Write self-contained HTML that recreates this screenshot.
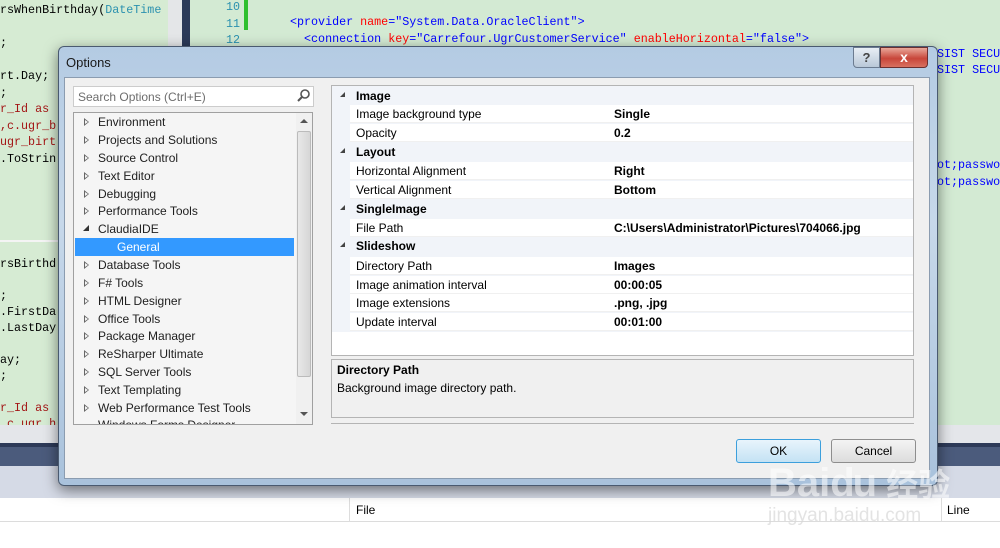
<!DOCTYPE html>
<html><head><meta charset="utf-8"><style>
*{margin:0;padding:0;box-sizing:border-box}
body{width:1000px;height:548px;overflow:hidden;position:relative;background:#fff;font-family:"Liberation Sans",sans-serif;font-size:12px;color:#000}
.a{position:absolute}
.code{font-family:"Liberation Mono",monospace;font-size:11.7px;white-space:pre;color:#000}
.t{position:absolute;left:98px;font-size:12px;color:#1e1e1e}
.tri{position:absolute;left:84px;width:0;height:0;border-left:5px solid #666;border-top:4px solid transparent;border-bottom:4px solid transparent}
.tri:after{content:"";position:absolute;left:-4px;top:-2px;border-left:3px solid #f5f5f5;border-top:2px solid transparent;border-bottom:2px solid transparent}
.r{position:absolute;left:350px;width:563px;height:18px;background:#fff;border-bottom:1px solid #f0f0f0}
.r span{position:absolute;left:6px;top:2px}
.r b{position:absolute;left:264px;top:2px}
.h{position:absolute;left:356px;font-weight:bold}
.ht{position:absolute;left:340px;width:0;height:0;border-right:5px solid #444;border-top:5px solid transparent}
</style></head><body>
<div class="a" style="left:0;top:0;width:1000px;height:425px;background:#d3ead3"></div>
<div class="a" style="left:0;top:0;width:170px;height:425px;background:#d6ebd3"></div>
<div class="a" style="left:168px;top:0;width:14px;height:425px;background:#e4e6e8"></div>
<div class="a" style="left:182px;top:0;width:8px;height:425px;background:#2b3a58"></div>
<div class="a" style="left:0;top:240px;width:170px;height:2px;background:#f4f4f4"></div>
<div class="a" style="left:244px;top:0;width:4px;height:30px;background:#2ec02e"></div>
<div class="a code" style="left:0;top:2px;line-height:16.5px"><span>rsWhenBirthday(<span style="color:#2b91af">DateTime</span></span>

;

rt.Day;
;
<span style="color:#a31515">r_Id as</span>
<span style="color:#a31515">,c.ugr_b</span>
<span style="color:#a31515">ugr_birt</span>
.ToStrin</div>
<div class="a code" style="left:0;top:256px;line-height:16px">rsBirthd

;
.FirstDa
.LastDay

ay;
;

<span style="color:#a31515">r_Id as</span>
<span style="color:#a31515">.c.ugr_h</span></div>
<div class="a code" style="left:226px;top:-1px;line-height:16.5px;color:#2b91af">10
11
12</div>
<div class="a code" style="left:290px;top:14px;line-height:16.5px;color:#00f">&lt;provider <span style="color:#f00">name</span>="System.Data.OracleClient"&gt;
  &lt;connection <span style="color:#f00">key</span>="Carrefour.UgrCustomerService" <span style="color:#f00">enableHorizontal</span>="false"&gt;</div>
<div class="a code" style="left:937px;top:46px;line-height:16px;color:#00f">SIST SECU
SIST SECU</div>
<div class="a code" style="left:937px;top:157px;line-height:17px;color:#00f">ot;passwo
ot;passwo</div>
<div class="a" style="left:0;top:425px;width:1000px;height:18px;background:#e4e6ea"></div>
<div class="a" style="left:0;top:443px;width:1000px;height:23px;background:#4b5b7c;border-top:4px solid #2d3a58"></div>
<div class="a" style="left:0;top:466px;width:1000px;height:32px;background:#d5dae6"></div>
<div class="a" style="left:0;top:498px;width:1000px;height:24px;background:#fff;border-bottom:1px solid #dcdcdc"></div>
<div class="a" style="left:349px;top:498px;width:1px;height:24px;background:#ddd"></div>
<div class="a" style="left:941px;top:498px;width:1px;height:24px;background:#ddd"></div>
<div class="a" style="left:356px;top:503px">File</div>
<div class="a" style="left:947px;top:503px">Line</div>
<div class="a" style="left:58px;top:46px;width:880px;height:440px;background:linear-gradient(#b4cbe3,#c7d8ea 40%,#a9c2dc);border:1px solid #4a5a70;border-radius:6px;box-shadow:0 4px 14px rgba(0,0,0,.5)"></div>
<div class="a" style="left:66px;top:55px;font-size:13px;color:#1a1a1a">Options</div>
<div class="a" style="left:853px;top:47px;width:27px;height:21px;border:1px solid #6b7b90;border-radius:0 0 0 4px;background:linear-gradient(#e8eef5,#b9c8d8);text-align:center;font-weight:bold;color:#444;font-size:13px;line-height:19px">?</div>
<div class="a" style="left:880px;top:47px;width:48px;height:21px;border:1px solid #6b3030;border-radius:0 0 4px 0;background:linear-gradient(#e9a89a,#c8463a 55%,#d87060);text-align:center;font-weight:bold;color:#fff;font-size:14px;line-height:19px">x</div>
<div class="a" style="left:64px;top:77px;width:866px;height:402px;background:#f0f0f0;border:1px solid #8b9cb0"></div>
<div class="a" style="left:73px;top:86px;width:241px;height:21px;background:#fff;border:1px solid #ccc"></div>
<div class="a" style="left:78px;top:90px;color:#6d6d6d">Search Options (Ctrl+E)</div>
<svg class="a" style="left:296px;top:88px" width="15" height="15"><circle cx="9" cy="6" r="4" fill="none" stroke="#555" stroke-width="1.6"/><line x1="6" y1="9" x2="2" y2="13" stroke="#555" stroke-width="2"/></svg>
<div class="a" style="left:73px;top:112px;width:240px;height:313px;background:#f5f5f5;border:1px solid #a0a0a0;overflow:hidden"></div>
<div class="a" style="left:296px;top:113px;width:16px;height:311px;background:#f0f0f0"></div>
<div class="a" style="left:300px;top:119px;border-bottom:4px solid #555;border-left:4px solid transparent;border-right:4px solid transparent"></div>
<div class="a" style="left:300px;top:412px;border-top:4px solid #555;border-left:4px solid transparent;border-right:4px solid transparent"></div>
<div class="a" style="left:297px;top:131px;width:14px;height:246px;background:linear-gradient(90deg,#e8e8e8,#d6d6d6);border:1px solid #bbb;border-radius:2px"></div>
<div class="a" style="left:75px;top:238px;width:219px;height:18px;background:#3399ff"></div>
<div class="tri" style="top:118px"></div><div class="t" style="top:115px">Environment</div>
<div class="tri" style="top:136px"></div><div class="t" style="top:133px">Projects and Solutions</div>
<div class="tri" style="top:154px"></div><div class="t" style="top:151px">Source Control</div>
<div class="tri" style="top:172px"></div><div class="t" style="top:169px">Text Editor</div>
<div class="tri" style="top:190px"></div><div class="t" style="top:187px">Debugging</div>
<div class="tri" style="top:207px"></div><div class="t" style="top:204px">Performance Tools</div>
<div class="a" style="left:83px;top:225px;width:0;height:0;border-right:6px solid #333;border-top:6px solid transparent"></div><div class="t" style="top:222px">ClaudiaIDE</div>
<div class="t" style="top:240px;left:117px;color:#fff">General</div>
<div class="tri" style="top:261px"></div><div class="t" style="top:258px">Database Tools</div>
<div class="tri" style="top:279px"></div><div class="t" style="top:276px">F# Tools</div>
<div class="tri" style="top:297px"></div><div class="t" style="top:294px">HTML Designer</div>
<div class="tri" style="top:315px"></div><div class="t" style="top:312px">Office Tools</div>
<div class="tri" style="top:332px"></div><div class="t" style="top:329px">Package Manager</div>
<div class="tri" style="top:350px"></div><div class="t" style="top:347px">ReSharper Ultimate</div>
<div class="tri" style="top:368px"></div><div class="t" style="top:365px">SQL Server Tools</div>
<div class="tri" style="top:386px"></div><div class="t" style="top:383px">Text Templating</div>
<div class="tri" style="top:404px"></div><div class="t" style="top:401px">Web Performance Test Tools</div>
<div class="t" style="top:418px;height:6px;overflow:hidden">Windows Forms Designer</div>
<div class="a" style="left:331px;top:85px;width:583px;height:271px;background:#fff;border:1px solid #b4b4b4"></div>
<div class="a" style="left:332px;top:86px;width:581px;height:246px;background:#f1f4f9"></div>
<div class="ht" style="top:92px"></div><div class="h" style="top:89px">Image</div>
<div class="r" style="top:105px"><span>Image background type</span><b>Single</b></div>
<div class="r" style="top:124px"><span>Opacity</span><b>0.2</b></div>
<div class="ht" style="top:148px"></div><div class="h" style="top:145px">Layout</div>
<div class="r" style="top:162px"><span>Horizontal Alignment</span><b>Right</b></div>
<div class="r" style="top:181px"><span>Vertical Alignment</span><b>Bottom</b></div>
<div class="ht" style="top:205px"></div><div class="h" style="top:202px">SingleImage</div>
<div class="r" style="top:219px"><span>File Path</span><b>C:\Users\Administrator\Pictures\704066.jpg</b></div>
<div class="ht" style="top:242px"></div><div class="h" style="top:239px">Slideshow</div>
<div class="r" style="top:257px"><span>Directory Path</span><b>Images</b></div>
<div class="r" style="top:276px"><span>Image animation interval</span><b>00:00:05</b></div>
<div class="r" style="top:294px"><span>Image extensions</span><b>.png, .jpg</b></div>
<div class="r" style="top:313px"><span>Update interval</span><b>00:01:00</b></div>
<div class="a" style="left:331px;top:359px;width:583px;height:59px;background:#f0f0f0;border:1px solid #b4b4b4"></div>
<div class="a" style="left:337px;top:363px;font-weight:bold">Directory Path</div>
<div class="a" style="left:337px;top:381px">Background image directory path.</div>
<div class="a" style="left:331px;top:423px;width:583px;height:1px;background:#b4b4b4"></div>
<div class="a" style="left:736px;top:439px;width:85px;height:24px;border:1px solid #3c9fdc;border-radius:3px;background:linear-gradient(#e8f4fc,#c4e2f4);text-align:center;line-height:22px">OK</div>
<div class="a" style="left:831px;top:439px;width:85px;height:24px;border:1px solid #8e8e8e;border-radius:3px;background:linear-gradient(#f4f4f4,#dcdcdc);text-align:center;line-height:22px">Cancel</div>
<div class="a" style="left:768px;top:460px;font-size:40px;font-weight:bold;color:rgba(255,255,255,.55)">Bai<span style="letter-spacing:-2px">du</span> <span style="font-family:'Noto Sans CJK SC',sans-serif;font-size:32px">经验</span></div>
<div class="a" style="left:768px;top:505px;font-size:19px;color:rgba(215,215,215,.7)">jingyan.baidu.com</div>
</body></html>
